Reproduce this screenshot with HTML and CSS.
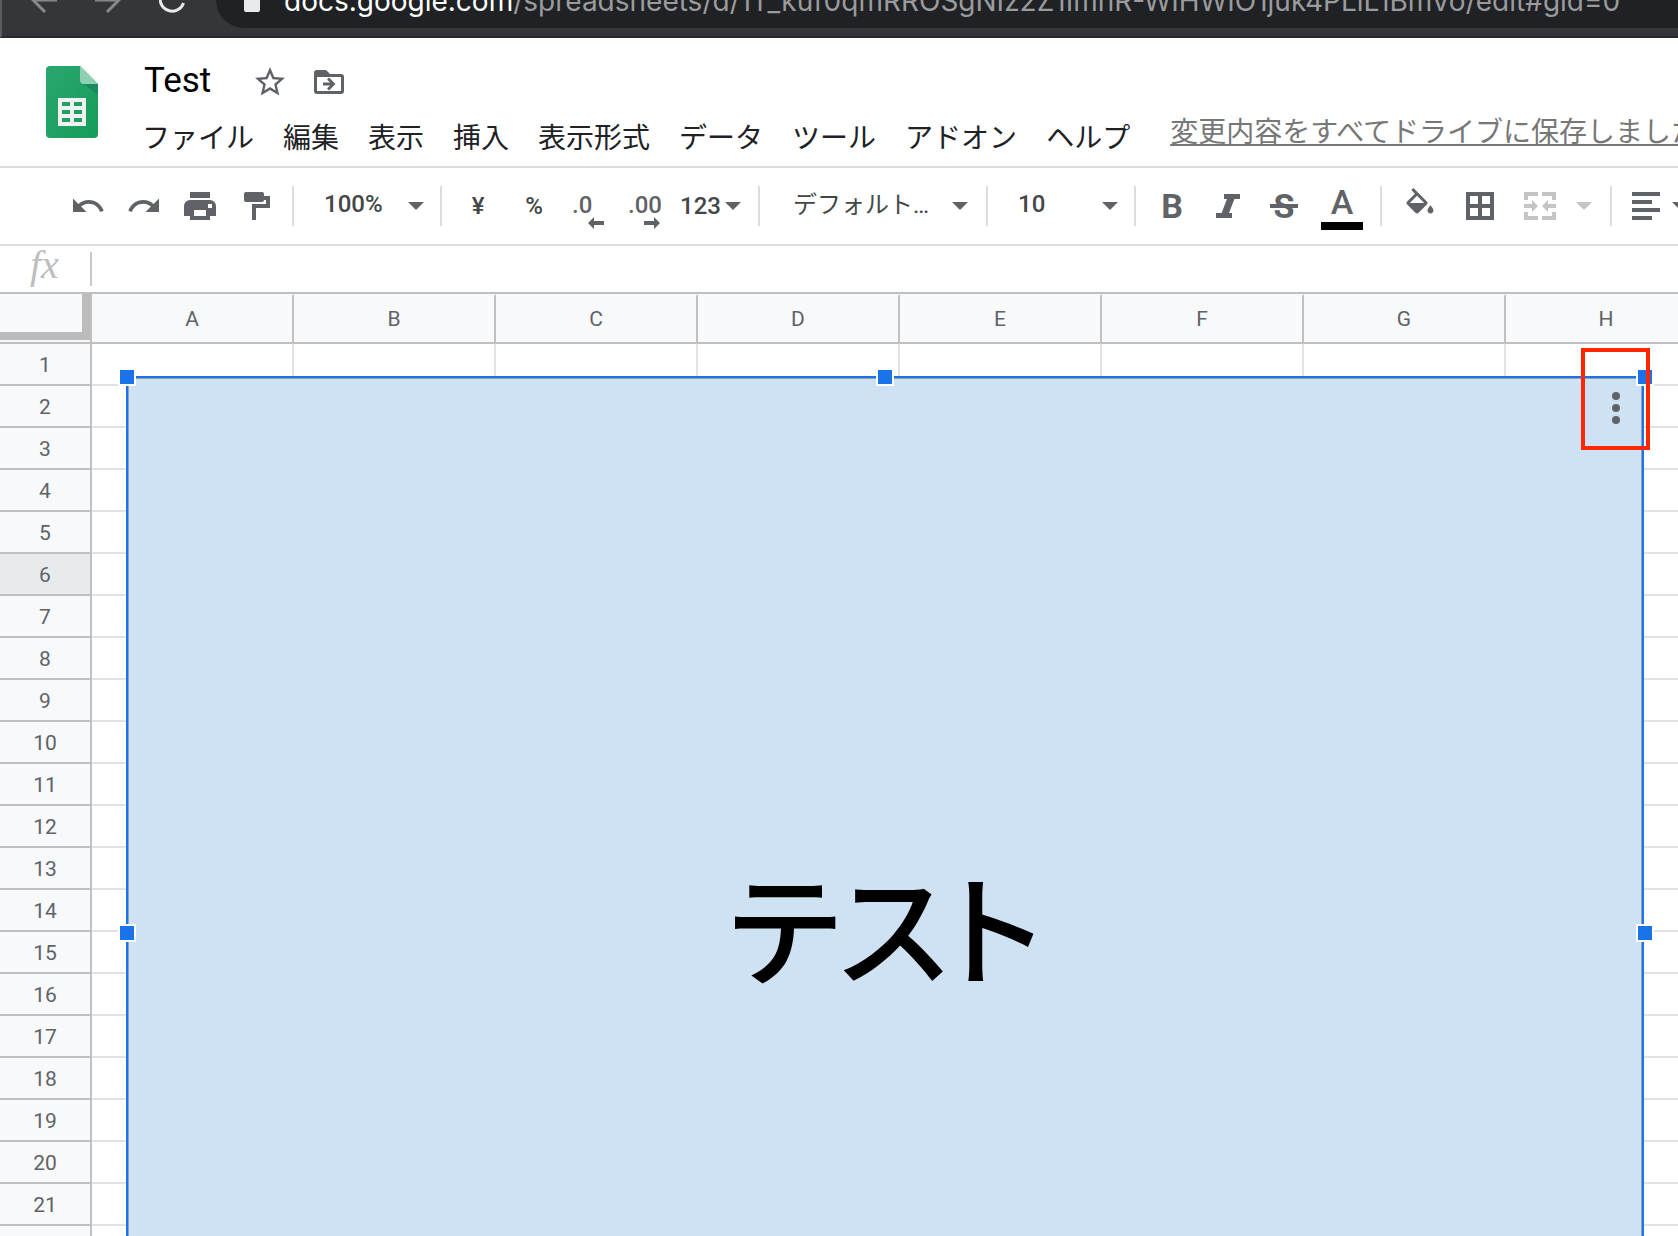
FILE: index.html
```html
<!DOCTYPE html>
<html lang="ja">
<head>
<meta charset="utf-8">
<title>Test</title>
<link rel="stylesheet" href="styles.css">
</head>
<body>
<div class="browser">
  <nav class="browser-nav">
    <button class="nav-btn" aria-label="戻る"><svg viewBox="0 0 26 26"><path d="M26 13H2M14 1L2 13l12 12"/></svg></button>
    <button class="nav-btn" aria-label="進む"><svg viewBox="0 0 26 26"><path d="M0 13h24M12 1l12 12-12 12"/></svg></button>
    <button class="nav-btn nav-reload" aria-label="再読み込み"><svg viewBox="0 0 26 26"><path d="M22 4a12 12 0 1 0 2.500 12M25 1v9h-9"/></svg></button>
  </nav>
  <div class="address">
    <svg class="lock" viewBox="0 0 16 24"><rect x="0" y="9" width="16" height="15" rx="2"/><path d="M4 9V6a4 4 0 0 1 8 0v3" fill="none" stroke="#e8eaed" stroke-width="2"/></svg>
    <span class="url"><span class="url-host">docs.google.com</span>/spreadsheets/d/1T_kuf0qmRROSgNIz2Z1ImhR-WIHWIO1juk4PLiL1BmVo/edit#gid=0</span>
  </div>
</div>

<header class="doc-header">
  <svg class="logo" viewBox="0 0 52 72">
    <defs><linearGradient id="sheet" x1="0" y1="0" x2="1" y2="1"><stop offset="0" stop-color="#2ba770"/><stop offset="1" stop-color="#149c5a"/></linearGradient></defs>
    <path d="M4 0h30l18 18v50a4 4 0 0 1-4 4H4a4 4 0 0 1-4-4V4a4 4 0 0 1 4-4z" fill="url(#sheet)"/>
    <path d="M37 17l15 12V18z" fill="#1b8a62"/>
    <path d="M34 0l18 18H38a4 4 0 0 1-4-4z" fill="#8ed1b1"/>
    <path d="M12 32h28v28H12zM16 36v4h8v-4zM28 36v4h8v-4zM16 44v4h8v-4zM28 44v4h8v-4zM16 52v4h8v-4zM28 52v4h8v-4z" fill="#f1f1f1" fill-rule="evenodd"/>
  </svg>
  <div class="doc-main">
    <div class="title-row">
      <input class="doc-title" type="text" value="Test" aria-label="名前を変更">
      <button class="title-btn" aria-label="スター"><svg viewBox="0 0 24 24"><path d="M22 9.240l-7.190-.62L12 2 9.190 8.630 2 9.240l5.460 4.730L5.820 21 12 17.270 18.180 21l-1.630-7.030L22 9.240zM12 15.400l-3.760 2.270 1-4.280-3.320-2.880 4.380-.38L12 6.100l1.710 4.040 4.380.38-3.320 2.880 1 4.280L12 15.400z"/></svg></button>
      <button class="title-btn" aria-label="移動"><svg viewBox="0 0 36 36"><path fill-rule="evenodd" d="M6 6h9l4 4h11a3 3 0 0 1 3 3v14a3 3 0 0 1-3 3H6a3 3 0 0 1-3-3V9a3 3 0 0 1 3-3zM6 13v14h24V13zM12 18.500h7l-3-3 2-2 6.500 6.500-6.500 6.500-2-2 3-3h-7z"/></svg></button>
    </div>
    <div class="menu-row">
      <nav class="menu">
        <button>ファイル</button>
        <button>編集</button>
        <button>表示</button>
        <button>挿入</button>
        <button>表示形式</button>
        <button>データ</button>
        <button>ツール</button>
        <button>アドオン</button>
        <button>ヘルプ</button>
      </nav>
      <a class="status" href="#">変更内容をすべてドライブに保存しました</a>
    </div>
  </div>
</header>

<div class="toolbar" role="toolbar">
  <button class="tool" aria-label="元に戻す"><svg viewBox="0 0 24 24"><path d="M12.500 8c-2.650 0-5.050.99-6.900 2.600L2 7v9h9l-3.620-3.620c1.390-1.160 3.160-1.880 5.120-1.880 3.540 0 6.550 2.310 7.600 5.500l2.370-.78C21.080 11.030 17.150 8 12.500 8z"/></svg></button>
  <button class="tool" aria-label="やり直し"><svg viewBox="0 0 24 24"><path d="M18.400 10.600C16.550 8.990 14.150 8 11.500 8c-4.650 0-8.580 3.030-9.960 7.220L3.900 16c1.050-3.190 4.050-5.500 7.600-5.500 1.950 0 3.730.72 5.120 1.880L13 16h9V7l-3.600 3.600z"/></svg></button>
  <button class="tool" aria-label="印刷"><svg viewBox="0 0 36 36"><path fill-rule="evenodd" d="M8 4h20v6H8zM8 12h20a6 6 0 0 1 6 6v10h-6v4H8v-4H2V18a6 6 0 0 1 6-6zM12 22v6h12v-6zM26 16v4h4v-4z"/></svg></button>
  <button class="tool" aria-label="書式を貼り付け"><svg viewBox="0 0 36 36"><rect x="6" y="4" width="20" height="10" rx="2"/><path d="M26 8h6v12H18v12h-4V16h14v-4h-2z"/></svg></button>
  <span class="sep"></span>
  <select class="picker zoom" aria-label="ズーム"><option>100%</option></select>
  <span class="sep"></span>
  <button class="tool">¥</button>
  <button class="tool">%</button>
  <button class="tool decimal" aria-label="小数点以下の桁数を減らす"><span>.0</span><svg class="arrow" viewBox="0 0 16 12"><path d="M0 6l6-6v4h10v4H6v4z"/></svg></button>
  <button class="tool decimal" aria-label="小数点以下の桁数を増やす"><span>.00</span><svg class="arrow" viewBox="0 0 16 12"><path d="M16 6l-6-6v4H0v4h10v4z"/></svg></button>
  <button class="tool format">123<svg class="caret" viewBox="0 0 16 8"><path d="M0 0h16L8 8z"/></svg></button>
  <span class="sep"></span>
  <select class="picker font" aria-label="フォント"><option>デフォルト…</option></select>
  <span class="sep"></span>
  <select class="picker size" aria-label="フォント サイズ"><option>10</option></select>
  <span class="sep"></span>
  <button class="tool letter bold" aria-label="太字">B</button>
  <button class="tool" aria-label="斜体"><svg viewBox="0 0 36 36"><path d="M14 6h16v5h-5.600l-5.400 14H22v5H6v-5h5.600L17 11h-3z"/></svg></button>
  <button class="tool letter bold strike" aria-label="取り消し線">S</button>
  <button class="tool wide letter color" aria-label="テキストの色">A</button>
  <span class="sep"></span>
  <button class="tool wide" aria-label="塗りつぶしの色"><svg viewBox="0 0 24 24"><path fill-rule="evenodd" d="M16.560 8.940L7.620 0 6.210 1.410l2.380 2.380-5.150 5.150c-.59.59-.59 1.540 0 2.120l5.500 5.500c.29.29.68.44 1.060.44s.77-.15 1.060-.44l5.500-5.500c.59-.58.59-1.530 0-2.120zM5.210 10L10 5.210 14.790 10zM19 11.500s-2 2.170-2 3.500c0 1.100.9 2 2 2s2-.9 2-2c0-1.330-2-3.500-2-3.500z"/></svg></button>
  <button class="tool wide" aria-label="枠線"><svg viewBox="0 0 36 36"><path fill-rule="evenodd" d="M4 4h28v28H4zM8 8v8h8V8zM20 8v8h8V8zM8 20v8h8v-8zM20 20v8h8v-8z"/></svg></button>
  <button class="tool wide" aria-label="セルを結合" disabled><svg viewBox="0 0 36 36"><path d="M2 4h14v4H6v4H2zM20 4h14v8h-4V8H20zM2 24h4v4h10v4H2zM30 24h4v8H20v-4h10zM2 16h8v-4l6 6-6 6v-4H2zM34 16h-8v-4l-6 6 6 6v-4h8z"/></svg></button>
  <button class="tool more" aria-label="結合の種類を選択" disabled><svg class="caret" viewBox="0 0 16 8"><path d="M0 0h16L8 8z"/></svg></button>
  <span class="sep"></span>
  <button class="tool align" aria-label="水平方向の配置"><svg viewBox="0 0 36 36"><path d="M4 4h28v4H4zM4 12h20v4H4zM4 20h28v4H4zM4 28h20v4H4z"/></svg><svg class="caret" viewBox="0 0 16 8"><path d="M0 0h16L8 8z"/></svg></button>
</div>

<div class="formula">
  <label for="formula-input">fx</label>
  <input id="formula-input" type="text">
</div>

<main class="sheet">
  <table>
    <colgroup><col class="col-head"><col span="8"></colgroup>
    <thead>
      <tr><th class="corner"></th><th>A</th><th>B</th><th>C</th><th>D</th><th>E</th><th>F</th><th>G</th><th>H</th></tr>
    </thead>
    <tbody>
      <tr><th>1</th><td></td><td></td><td></td><td></td><td></td><td></td><td></td><td></td></tr>
      <tr><th>2</th><td></td><td></td><td></td><td></td><td></td><td></td><td></td><td></td></tr>
      <tr><th>3</th><td></td><td></td><td></td><td></td><td></td><td></td><td></td><td></td></tr>
      <tr><th>4</th><td></td><td></td><td></td><td></td><td></td><td></td><td></td><td></td></tr>
      <tr><th>5</th><td></td><td></td><td></td><td></td><td></td><td></td><td></td><td></td></tr>
      <tr class="active"><th>6</th><td></td><td></td><td></td><td></td><td></td><td></td><td></td><td></td></tr>
      <tr><th>7</th><td></td><td></td><td></td><td></td><td></td><td></td><td></td><td></td></tr>
      <tr><th>8</th><td></td><td></td><td></td><td></td><td></td><td></td><td></td><td></td></tr>
      <tr><th>9</th><td></td><td></td><td></td><td></td><td></td><td></td><td></td><td></td></tr>
      <tr><th>10</th><td></td><td></td><td></td><td></td><td></td><td></td><td></td><td></td></tr>
      <tr><th>11</th><td></td><td></td><td></td><td></td><td></td><td></td><td></td><td></td></tr>
      <tr><th>12</th><td></td><td></td><td></td><td></td><td></td><td></td><td></td><td></td></tr>
      <tr><th>13</th><td></td><td></td><td></td><td></td><td></td><td></td><td></td><td></td></tr>
      <tr><th>14</th><td></td><td></td><td></td><td></td><td></td><td></td><td></td><td></td></tr>
      <tr><th>15</th><td></td><td></td><td></td><td></td><td></td><td></td><td></td><td></td></tr>
      <tr><th>16</th><td></td><td></td><td></td><td></td><td></td><td></td><td></td><td></td></tr>
      <tr><th>17</th><td></td><td></td><td></td><td></td><td></td><td></td><td></td><td></td></tr>
      <tr><th>18</th><td></td><td></td><td></td><td></td><td></td><td></td><td></td><td></td></tr>
      <tr><th>19</th><td></td><td></td><td></td><td></td><td></td><td></td><td></td><td></td></tr>
      <tr><th>20</th><td></td><td></td><td></td><td></td><td></td><td></td><td></td><td></td></tr>
      <tr><th>21</th><td></td><td></td><td></td><td></td><td></td><td></td><td></td><td></td></tr>
      <tr><th></th><td></td><td></td><td></td><td></td><td></td><td></td><td></td><td></td></tr>
    </tbody>
  </table>

  <div class="drawing">
    <span class="drawing-text">テスト</span>
    <i class="handle top left"></i>
    <i class="handle top center"></i>
    <i class="handle top right"></i>
    <i class="handle middle left"></i>
    <i class="handle middle right"></i>
    <button class="kebab" aria-label="その他"><svg viewBox="0 0 8 32"><circle cx="4" cy="4" r="4"/><circle cx="4" cy="16" r="4"/><circle cx="4" cy="28" r="4"/></svg></button>
    <div class="callout"></div>
  </div>
</main>
</body>
</html>
```
FILE: styles.css
```css
* {
  box-sizing: border-box;
}

body {
  margin: 0;
  height: 100vh;
  display: flex;
  flex-direction: column;
  overflow: hidden;
  background: #fff;
  color: #202124;
  font-family: Roboto, "Noto Sans CJK JP", sans-serif;
}

button,
input,
select {
  margin: 0;
  padding: 0;
  border: 0;
  background: none;
  color: inherit;
  font: inherit;
}

svg {
  display: block;
  flex: none;
}

.browser {
  flex: none;
  display: flex;
  align-items: center;
  height: 74px;
  margin-top: -36px;
  padding-left: 29px;
  border-left: 2px solid #5c5d60;
  border-bottom: 2px solid #28292b;
  background: #35363a;
}

.browser-nav {
  display: flex;
  gap: 38px;
  margin-right: 31px;
}

.nav-btn {
  width: 26px;
  height: 26px;
}

.nav-btn path {
  fill: none;
  stroke: #87888b;
  stroke-width: 3;
}

.nav-reload path {
  stroke: #e8eaed;
}

.address {
  flex: 1;
  display: flex;
  align-items: center;
  gap: 24px;
  height: 56px;
  padding-left: 28px;
  border-radius: 28px 0 0 28px;
  background: #202124;
  overflow: hidden;
}

.lock {
  width: 16px;
  height: 24px;
  fill: #e8eaed;
}

.url {
  padding-top: 2px;
  color: #9a9b9d;
  font-family: Inter, sans-serif;
  font-size: 28px;
  line-height: 36px;
  white-space: nowrap;
}

.url-host {
  color: #fff;
}

/* Document header */
.doc-header {
  flex: none;
  display: flex;
  padding: 16px 0 5px 46px;
  border-bottom: 2px solid #dadce0;
}

.logo {
  width: 52px;
  height: 72px;
  margin: 12px 46px 0 0;
}

.doc-main {
  flex: 1;
  min-width: 0;
}

.title-row {
  display: flex;
  align-items: center;
  gap: 23px;
  height: 56px;
}

.doc-title {
  width: 85px;
  padding-bottom: 2px;
  color: #000;
  font-size: 35px;
  line-height: 48px;
}

.title-btn svg {
  width: 36px;
  height: 36px;
  fill: #5f6368;
}

.menu-row {
  display: flex;
  margin: 7px 0 0 -2px;
  overflow: hidden;
  white-space: nowrap;
}

.menu {
  display: flex;
  gap: 29px;
}

.menu button {
  font-size: 28px;
  line-height: 44px;
}

.status {
  margin-left: 40px;
  color: #777;
  font-size: 28px;
  line-height: 32px;
}

/* Toolbar */
.toolbar {
  flex: none;
  display: flex;
  align-items: center;
  height: 78px;
  padding-left: 60px;
  border-bottom: 2px solid #dadce0;
  overflow: hidden;
  color: #444746;
  font-size: 24px;
  font-weight: 500;
}

.sep {
  flex: none;
  width: 2px;
  height: 40px;
  margin: 0 8px;
  background: #dadce0;
}

.tool {
  flex: none;
  display: flex;
  align-items: center;
  justify-content: center;
  width: 56px;
  height: 56px;
  line-height: 32px;
}

.tool svg {
  width: 36px;
  height: 36px;
  fill: #5f6368;
}

.tool .caret {
  width: 16px;
  height: 8px;
}

.tool:disabled svg {
  fill: #c3c4c6;
}

.wide {
  width: 60px;
}

.picker {
  flex: none;
  appearance: none;
  height: 56px;
  padding-bottom: 4px;
  background: url("data:image/svg+xml,%3Csvg xmlns='http://www.w3.org/2000/svg' width='16' height='8'%3E%3Cpath d='M0 0h16L8 8z' fill='%235f6368'/%3E%3C/svg%3E") no-repeat right 8px center;
}

.zoom {
  width: 130px;
  padding-left: 22px;
}

.font {
  width: 210px;
  padding-bottom: 2px;
  padding-left: 25px;
  background-position: right 10px center;
  font-weight: 400;
}

.size {
  width: 130px;
  padding-left: 22px;
}

.decimal {
  flex-direction: column;
  align-items: flex-start;
  padding: 10px 0 0 10px;
  color: #5f6368;
}

.decimal span {
  line-height: 24px;
}

.tool .arrow {
  width: 16px;
  height: 12px;
  margin-left: 16px;
}

.format {
  width: 76px;
  justify-content: flex-start;
  gap: 4px;
  padding-left: 6px;
}

.letter {
  color: #5f6368;
  font-size: 34px;
}

.bold {
  font-weight: 700;
}

.strike {
  background: linear-gradient(#5f6368, #5f6368) no-repeat center / 28px 4px;
}

.color {
  padding-bottom: 8px;
  background: linear-gradient(#000, #000) no-repeat center bottom 4px / 42px 8px;
}

.more {
  width: 32px;
  justify-content: flex-start;
  padding-left: 6px;
}

.align {
  width: auto;
  gap: 8px;
  padding-left: 8px;
}

/* Formula bar */
.formula {
  flex: none;
  display: flex;
  align-items: center;
  height: 48px;
  border-bottom: 2px solid #c0c0c0;
}

.formula label {
  width: 92px;
  padding: 0 0 8px 30px;
  border-right: 2px solid #c8c9cb;
  color: #bdbebf;
  font: italic 40px/26px "Liberation Serif", serif;
}

.formula input {
  flex: 1;
  height: 34px;
  padding: 0 8px;
  font-size: 24px;
}

/* Grid */
.sheet {
  flex: 1;
  min-height: 0;
  position: relative;
  overflow: hidden;
}

table {
  width: 1708px;
  table-layout: fixed;
  border-collapse: separate;
  border-spacing: 0;
}

col {
  width: 202px;
}

.col-head {
  width: 92px;
}

th,
td {
  height: 42px;
  padding: 0;
  border: solid #e2e3e3;
  border-width: 0 2px 2px 0;
}

th {
  border-color: #c0c0c0;
  background: #f8f9fa;
  color: #5f6368;
  font-size: 21px;
  font-weight: 400;
  line-height: 24px;
}

thead th {
  height: 50px;
  border-top: 2px solid #f8f9fa;
}

thead .corner {
  border-top: 0;
  background: linear-gradient(#bcbcbc, #bcbcbc) no-repeat right top / 8px 46px,
    linear-gradient(#bcbcbc, #bcbcbc) no-repeat left 38px / 100% 8px,
    #f8f9fa;
}

tbody th {
  padding-top: 2px;
}

.active th {
  background: #e8eaed;
}

/* Selected drawing floating above the cells */
.drawing {
  position: absolute;
  top: 82px;
  left: 126px;
  width: 1518px;
  height: 1114px;
  display: flex;
  align-items: center;
  justify-content: center;
  border: 2px solid #1a73e8;
  background: #cfe2f3;
  box-shadow: inset 0 0 0 1px #8fa3b5;
}

.drawing-text {
  padding-bottom: 18px;
  color: #000;
  font: 500 121px/160px "Noto Sans CJK JP", sans-serif;
  font-feature-settings: "palt";
}

.handle {
  position: absolute;
  width: 18px;
  height: 18px;
  border: 2px solid #fff;
  background: #1a73e8;
}

.handle.top {
  top: -10px;
}

.handle.middle {
  top: calc(50% - 9px);
}

.handle.left {
  left: -10px;
}

.handle.center {
  left: calc(50% - 9px);
}

.handle.right {
  right: -12px;
}

.kebab {
  position: absolute;
  top: 14px;
  right: 22px;
}

.kebab svg {
  width: 8px;
  height: 32px;
  fill: #5f6368;
}

.callout {
  position: absolute;
  top: -30px;
  right: -8px;
  width: 69px;
  height: 102px;
  border: 4px solid #ff2600;
}
```
